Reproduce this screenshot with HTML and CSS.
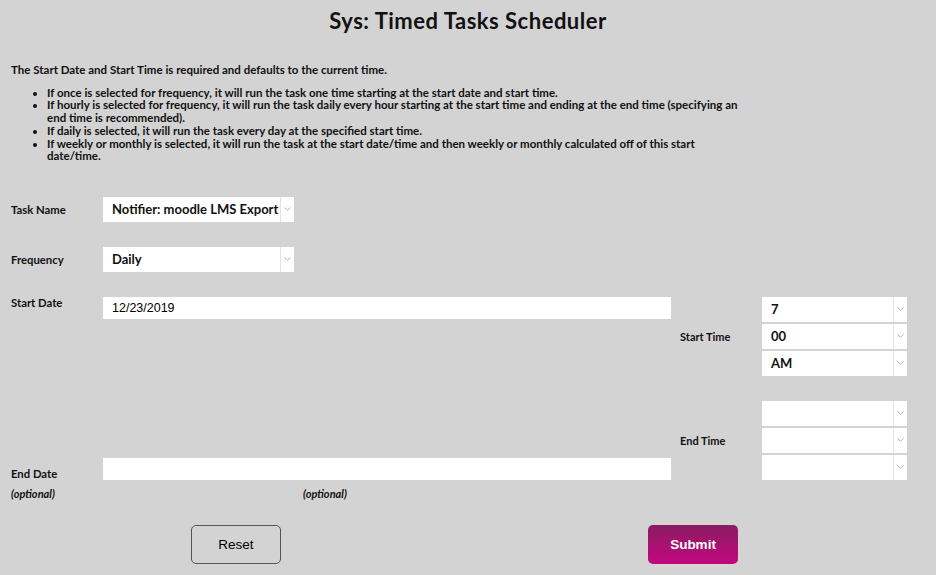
FILE: index.html
```html
<!DOCTYPE html>
<html>
<head>
<meta charset="utf-8">
<link rel="stylesheet" href="styles.css">
</head>
<body>
<h1 class="title">Sys: Timed Tasks Scheduler</h1>
<div class="intro">
  <p class="lead">The Start Date and Start Time is required and defaults to the current time.</p>
  <ul class="rules">
    <li>If once is selected for frequency, it will run the task one time starting at the start date and start time.</li>
    <li>If hourly is selected for frequency, it will run the task daily every hour starting at the start time and ending at the end time (specifying an end time is recommended).</li>
    <li>If daily is selected, it will run the task every day at the specified start time.</li>
    <li>If weekly or monthly is selected, it will run the task at the start date/time and then weekly or monthly calculated off of this start date/time.</li>
  </ul>
</div>

<div class="form">
  <div class="row row-task">
    <div class="label">Task Name</div>
    <div class="sel sel-task"><span class="val">Notifier: moodle LMS Export</span><span class="arr"><svg width="7" height="4" viewBox="0 0 7 4"><path d="M0.5 0.5 L3.5 3.2 L6.5 0.5" fill="none" stroke="#b0b0b0" stroke-width="1"/></svg></span></div>
  </div>
  <div class="row row-freq">
    <div class="label">Frequency</div>
    <div class="sel sel-task"><span class="val">Daily</span><span class="arr"><svg width="7" height="4" viewBox="0 0 7 4"><path d="M0.5 0.5 L3.5 3.2 L6.5 0.5" fill="none" stroke="#b0b0b0" stroke-width="1"/></svg></span></div>
  </div>

  <div class="block block-start">
    <div class="label label-sd">Start Date</div>
    <div class="datecol"><div class="input date-input">12/23/2019</div></div>
    <div class="tlabel">Start Time</div>
    <div class="tsels">
      <div class="sel tsel"><span class="val">7</span><span class="arr"><svg width="7" height="4" viewBox="0 0 7 4"><path d="M0.5 0.5 L3.5 3.2 L6.5 0.5" fill="none" stroke="#b0b0b0" stroke-width="1"/></svg></span></div>
      <div class="sel tsel"><span class="val">00</span><span class="arr"><svg width="7" height="4" viewBox="0 0 7 4"><path d="M0.5 0.5 L3.5 3.2 L6.5 0.5" fill="none" stroke="#b0b0b0" stroke-width="1"/></svg></span></div>
      <div class="sel tsel"><span class="val">AM</span><span class="arr"><svg width="7" height="4" viewBox="0 0 7 4"><path d="M0.5 0.5 L3.5 3.2 L6.5 0.5" fill="none" stroke="#b0b0b0" stroke-width="1"/></svg></span></div>
    </div>
  </div>

  <div class="block block-end">
    <div class="label label-ed">End Date</div>
    <div class="datecol end-datecol"><div class="input date-input"></div></div>
    <div class="tlabel">End Time</div>
    <div class="tsels">
      <div class="sel tsel"><span class="val"></span><span class="arr"><svg width="7" height="4" viewBox="0 0 7 4"><path d="M0.5 0.5 L3.5 3.2 L6.5 0.5" fill="none" stroke="#b0b0b0" stroke-width="1"/></svg></span></div>
      <div class="sel tsel"><span class="val"></span><span class="arr"><svg width="7" height="4" viewBox="0 0 7 4"><path d="M0.5 0.5 L3.5 3.2 L6.5 0.5" fill="none" stroke="#b0b0b0" stroke-width="1"/></svg></span></div>
      <div class="sel tsel"><span class="val"></span><span class="arr"><svg width="7" height="4" viewBox="0 0 7 4"><path d="M0.5 0.5 L3.5 3.2 L6.5 0.5" fill="none" stroke="#b0b0b0" stroke-width="1"/></svg></span></div>
    </div>
  </div>
  <div class="optrow">
    <div class="opt opt-left">(optional)</div>
    <div class="opt opt-right">(optional)</div>
  </div>

  <div class="buttons">
    <button class="btn btn-reset">Reset</button>
    <button class="btn btn-submit">Submit</button>
  </div>
</div>
</body>
</html>
```

FILE: styles.css
```css
* { box-sizing: border-box; }
html, body { margin: 0; padding: 0; }
body {
  width: 936px;
  height: 575px;
  background: #d3d3d3;
  color: #111;
  font-family: Lato, "Liberation Sans", sans-serif;
  overflow: hidden;
}
.title {
  margin: 0;
  padding-top: 7px;
  height: 40px;
  text-align: center;
  font-size: 22px;
  font-weight: bold;
  letter-spacing: 0.5px;
  color: #111;
}
.intro {
  padding-left: 11px;
  padding-top: 24px;
  font-size: 11.5px;
  font-weight: bold;
  line-height: 12.7px;
}
.lead { margin: 0 0 10px 0; }
.rules {
  margin: 0;
  padding-left: 36px;
  width: 736px;
}
.rules li { margin: 0; }

.form { padding-left: 11px; margin-top: 0; }
.label {
  width: 92px;
  font-size: 11.3px;
  font-weight: bold;
}
.row { display: flex; align-items: center; }
.row-task { margin-top: 34px; }
.row-freq { margin-top: 25px; }

.sel {
  display: flex;
  background: #e3e3e3;
  gap: 1px;
}
.sel .val {
  flex: 1;
  background: #fff;
  display: flex;
  align-items: center;
  padding-left: 9px;
  font-size: 13px;
  font-weight: bold;
  white-space: nowrap;
  overflow: hidden;
}
.sel .arr {
  width: 13px;
  background: #fff;
  display: flex;
  align-items: center;
  justify-content: center;
}
.sel-task { width: 191px; height: 25px; }

.block {
  display: grid;
  grid-template-columns: 92px 568px 91px 145px;
}
.block-start { margin-top: 25px; }
.block-end { margin-top: 25px; }
.label-sd { margin-top: -1px; }
.datecol { display: flex; flex-direction: column; }
.end-datecol { justify-content: flex-end; }
.input {
  height: 22px;
  background: #fff;
  width: 568px;
}
.date-input {
  font-family: "Liberation Sans", Arial, sans-serif;
  font-size: 12.5px;
  display: flex;
  align-items: center;
  padding-left: 9px;
  color: #000;
}
.label-ed { align-self: end; padding-bottom: 0; }
.tlabel {
  align-self: center;
  padding-left: 9px;
  font-size: 11px;
  font-weight: bold;
}
.tsels { display: flex; flex-direction: column; gap: 2px; }
.tsel { width: 145px; height: 25px; }
.tsel .val { padding-left: 9px; }

.optrow { display: flex; margin-top: 7px; }
.opt { font-size: 11px; font-style: italic; font-weight: bold; }
.opt-left { width: 292px; }

.buttons {
  display: flex;
  margin-top: 25px;
  padding-left: 180px;
}
.btn {
  width: 90px;
  height: 39px;
  border-radius: 5px;
  font-family: "Liberation Sans", Arial, sans-serif;
  font-size: 13.5px;
  cursor: pointer;
}
.btn-reset {
  background: #d3d3d3;
  border: 1px solid #555;
  color: #000;
}
.btn-submit {
  margin-left: 367px;
  border: none;
  color: #fff;
  font-weight: bold;
  background: linear-gradient(#8a1d62, #c2077f);
}
```
